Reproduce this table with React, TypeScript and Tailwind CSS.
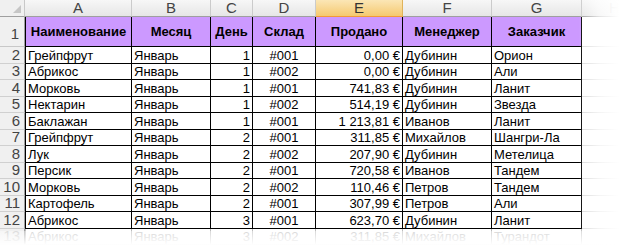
import React from "react";

const cols = [
  { key: "A", w: "w-[107px]", first: true },
  { key: "B", w: "w-[79px]" },
  { key: "C", w: "w-[42px]" },
  { key: "D", w: "w-[63px]" },
  { key: "E", w: "w-[87px]" },
  { key: "F", w: "w-[89px]" },
  { key: "G", w: "w-[90px]" },
];

const headers = ["Наименование", "Месяц", "День", "Склад", "Продано", "Менеджер", "Заказчик"];

const data: string[][] = [
  ["Грейпфрут", "Январь", "1", "#001", "0,00 €", "Дубинин", "Орион"],
  ["Абрикос", "Январь", "1", "#002", "0,00 €", "Дубинин", "Али"],
  ["Морковь", "Январь", "1", "#001", "741,83 €", "Дубинин", "Ланит"],
  ["Нектарин", "Январь", "1", "#002", "514,19 €", "Дубинин", "Звезда"],
  ["Баклажан", "Январь", "1", "#001", "1 213,81 €", "Иванов", "Ланит"],
  ["Грейпфрут", "Январь", "2", "#001", "311,85 €", "Михайлов", "Шангри-Ла"],
  ["Лук", "Январь", "2", "#002", "207,90 €", "Дубинин", "Метелица"],
  ["Персик", "Январь", "2", "#001", "720,58 €", "Иванов", "Тандем"],
  ["Морковь", "Январь", "2", "#002", "110,46 €", "Петров", "Тандем"],
  ["Картофель", "Январь", "2", "#001", "307,99 €", "Петров", "Али"],
  ["Абрикос", "Январь", "3", "#001", "623,70 €", "Дубинин", "Ланит"],
  ["Абрикос", "Январь", "3", "#002", "311,85 €", "Михайлов", "Турандот"],
];

const align = ["justify-start pl-[2px]", "justify-start pl-[2px]", "justify-end pr-[2px]", "justify-center", "justify-end pr-[2px]", "justify-start pl-[2px]", "justify-start pl-[2px]"];

export default function App() {
  const font = { fontFamily: '"Liberation Sans", Arial, sans-serif' };
  return (
    <div className="relative w-[619px] h-[245px] overflow-hidden bg-white text-black" style={font}>
      {/* column header row */}
      <div className="flex h-[17px]">
        <div className="relative w-[25px] h-[17px] shrink-0 bg-[#f0f0f0] border-r border-b border-r-[#c8c8c8] border-b-[#9f9f9f]">
          <div className="absolute right-[3px] bottom-[3px] w-0 h-0 border-l-[8px] border-l-transparent border-b-[8px] border-b-[#c6c6c6]" />
        </div>
        {cols.map((c) =>
          c.key === "E" ? (
            <div key={c.key} className={`${c.w} shrink-0 h-[17px] flex items-center justify-center text-[15px] text-[#333] bg-gradient-to-b from-[#fbe6b5] to-[#f5c96e] border-r border-b border-r-[#e0b35a] border-b-[#f29a38]`}>
              {c.key}
            </div>
          ) : (
            <div key={c.key} className={`${c.w} shrink-0 h-[17px] flex items-center justify-center text-[15px] text-[#444] bg-gradient-to-b from-[#f7f7f7] to-[#e6e6e6] border-r border-b border-r-[#cbcbcb] border-b-[#9f9f9f]`}>
              {c.key}
            </div>
          )
        )}
        <div className="flex-1 h-[17px] flex items-center pl-[27px] text-[15px] text-[#bbb] bg-gradient-to-b from-[#f7f7f7] to-[#e6e6e6] border-b border-b-[#9f9f9f]">
          H
        </div>
      </div>

      {/* row 1 header */}
      <div className="flex h-[30px]">
        <div className="w-[25px] shrink-0 h-[30px] flex items-end justify-end pr-[5px] pb-[1px] text-[15px] text-[#444] bg-[#f0f0f0] border-r border-b border-r-[#9f9f9f] border-b-[#c8c8c8]">
          1
        </div>
        {cols.map((c, i) => (
          <div key={c.key} className={`${c.w} shrink-0 h-[30px] flex items-center justify-center text-[13px] font-bold text-[#000] bg-[#cc99ff] border-r border-b border-black ${c.first ? "border-l" : ""}`}>
            {headers[i]}
          </div>
        ))}
        <div className="flex-1 h-[30px] border-b border-[#dadada]" />
      </div>

      {data.map((row, ri) => {
        const h = ri % 2 === 0 ? "h-[17px]" : "h-[16px]";
        const faded = ri === data.length - 1;
        return (
          <div key={ri} className={`flex ${h}`}>
            <div className={`w-[25px] shrink-0 ${h} flex items-center justify-end pr-[4px] text-[15px] ${faded ? "text-[#c4c4c4]" : "text-[#444]"} bg-[#f0f0f0] border-r border-b border-r-[#9f9f9f] border-b-[#d0d0d0]`}>
              {ri + 2}
            </div>
            {cols.map((c, ci) => (
              <div key={c.key} className={`${c.w} shrink-0 ${h} flex items-center ${align[ci]} text-[13px] leading-none ${faded ? "text-[#bdbdbd] border-[#bdbdbd]" : "text-black border-black"} border-r border-b ${c.first ? "border-l" : ""} whitespace-nowrap`}>
                {row[ci]}
              </div>
            ))}
            <div className={`flex-1 ${h} border-b border-[#dadada]`} />
          </div>
        );
      })}

      {/* fading edges */}
      <div className="absolute top-0 right-0 w-[40px] h-full bg-gradient-to-r from-transparent via-white/70 to-white pointer-events-none" />
      <div className="absolute left-0 bottom-0 w-full h-[14px] bg-gradient-to-b from-white/40 to-white pointer-events-none" />
    </div>
  );
}
